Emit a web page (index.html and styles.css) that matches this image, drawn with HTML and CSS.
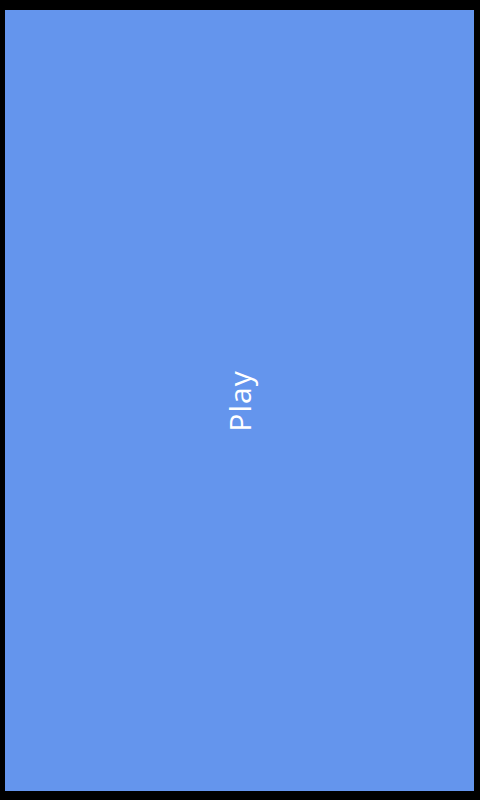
FILE: index.html
```html
<!DOCTYPE html>
<html>
<head>
<meta charset="utf-8">
<link rel="stylesheet" href="styles.css">
</head>
<body>
<div class="screen">
  <div class="play">Play</div>
</div>
</body>
</html>
```

FILE: styles.css
```css
html, body {
  margin: 0;
  padding: 0;
  background: #000;
  width: 480px;
  height: 800px;
  overflow: hidden;
}
.screen {
  margin: 10px 6px 0 5px;
  width: 469px;
  height: 781px;
  background: #6495ed;
  display: flex;
  align-items: center;
  justify-content: center;
}
.play {
  font-family: "Open Sans", sans-serif;
  font-size: 30px;
  letter-spacing: 1px;
  color: #fff;
  transform: rotate(-90deg);
  line-height: 1;
}
```
